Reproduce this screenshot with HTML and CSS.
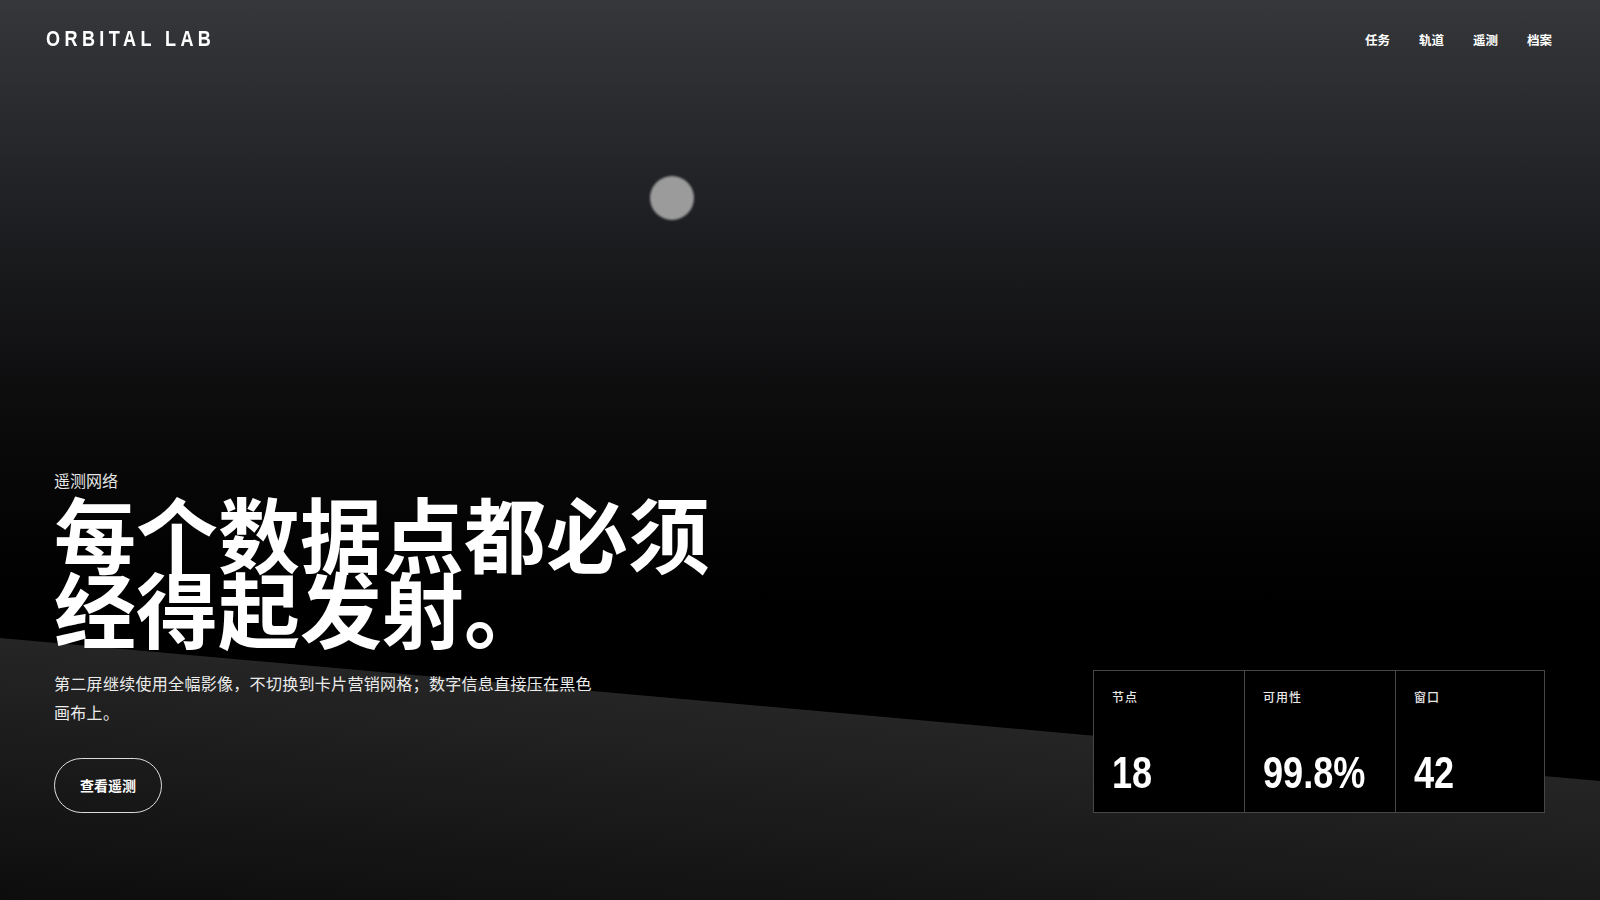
FILE: index.html
```html
<!DOCTYPE html>
<html lang="zh-CN">
<head>
<meta charset="utf-8">
<title>Orbital Lab</title>
<link rel="stylesheet" href="styles.css">
</head>
<body>
<div class="page">
  <div class="slope"></div>
  <div class="orb"></div>
  <header class="topbar">
    <div class="logo">ORBITAL LAB</div>
    <nav class="nav">
      <a href="#">任务</a>
      <a href="#">轨道</a>
      <a href="#">遥测</a>
      <a href="#">档案</a>
    </nav>
  </header>
  <main class="hero">
    <section class="copy">
      <div class="eyebrow">遥测网络</div>
      <h1 class="title">每个数据点都必须经得起发射。</h1>
      <p class="lead">第二屏继续使用全幅影像，不切换到卡片营销网格；数字信息直接压在黑色画布上。</p>
      <a class="cta" href="#">查看遥测</a>
    </section>
    <dl class="stats">
      <div class="stat">
        <dt>节点</dt>
        <dd>18</dd>
      </div>
      <div class="stat">
        <dt>可用性</dt>
        <dd>99.8%</dd>
      </div>
      <div class="stat">
        <dt>窗口</dt>
        <dd>42</dd>
      </div>
    </dl>
  </main>
</div>
</body>
</html>
```
FILE: styles.css
```css
* { box-sizing: border-box; }
html, body { margin: 0; padding: 0; }
body {
  background: #000;
  color: #fff;
  font-family: "Noto Sans CJK SC", "Noto Sans", sans-serif;
}
.page {
  position: relative;
  width: 1600px;
  height: 900px;
  overflow: hidden;
  display: flex;
  flex-direction: column;
  background: linear-gradient(180deg, #36373b 0%, #202124 22%, #0c0c0d 45%, #030303 60%, #000 68%);
}
.slope {
  position: absolute;
  inset: 0;
  background: linear-gradient(185deg, #252525 75%, #0d0d0d 100%);
  clip-path: polygon(0 638px, 100% 781px, 100% 100%, 0 100%);
  z-index: 0;
}
.orb {
  position: absolute;
  left: 650px;
  top: 176px;
  width: 44px;
  height: 44px;
  border-radius: 50%;
  background: #9b9b9b;
  filter: blur(0.8px);
  z-index: 1;
}
.topbar {
  position: relative;
  z-index: 2;
  display: flex;
  justify-content: space-between;
  align-items: flex-start;
  padding: 27px 48px 0 46px;
  height: 79px;
}
.logo {
  font-family: "Liberation Sans", Arial, sans-serif;
  font-weight: 700;
  font-size: 22px;
  line-height: 24px;
  letter-spacing: 5.4px;
  transform: scaleX(0.82);
  transform-origin: left center;
  white-space: nowrap;
}
.nav {
  display: flex;
  gap: 29px;
  padding-top: 4px;
}
.nav a {
  color: #fff;
  text-decoration: none;
  font-size: 12.5px;
  font-weight: 700;
  line-height: 18px;
}
.hero {
  position: relative;
  z-index: 2;
  flex: 1;
  display: flex;
  justify-content: space-between;
  align-items: flex-end;
  padding: 0 55px 87px 54px;
}
.copy {
  display: flex;
  flex-direction: column;
  align-items: flex-start;
}
.eyebrow {
  font-size: 16px;
  line-height: 24px;
  color: #e6e6e6;
}
.title {
  margin: 2px 0 0 0;
  max-width: 700px;
  font-size: 82px;
  line-height: 75px;
  font-weight: 700;
  color: #fff;
}
.lead {
  margin: 25px 0 0 0;
  max-width: 546px;
  font-size: 16px;
  line-height: 28.8px;
  letter-spacing: 0.3px;
  color: #ebebeb;
}
.cta {
  margin-top: 31px;
  display: inline-block;
  padding: 17px 25px;
  border: 1px solid rgba(255, 255, 255, 0.85);
  border-radius: 999px;
  color: #fff;
  text-decoration: none;
  font-size: 14px;
  font-weight: 700;
  line-height: 19px;
}
.stats {
  margin: 0;
  width: 452px;
  height: 143px;
  display: grid;
  grid-template-columns: 150px 151px 1fr;
  border: 1px solid #474747;
  background: #000;
}
.stat {
  display: flex;
  flex-direction: column;
  justify-content: space-between;
  padding: 18px 18px 17px 18px;
  border-left: 1px solid #474747;
}
.stat:first-child { border-left: none; }
.stat dt {
  font-size: 12px;
  line-height: 16px;
  letter-spacing: 1px;
  color: #e8e8e8;
  font-weight: 500;
}
.stat dd {
  margin: 0;
  font-family: "Liberation Sans", Arial, sans-serif;
  font-weight: 700;
  font-size: 44px;
  line-height: 44px;
  color: #fff;
  transform: scaleX(0.82);
  transform-origin: left center;
  white-space: nowrap;
}
```
